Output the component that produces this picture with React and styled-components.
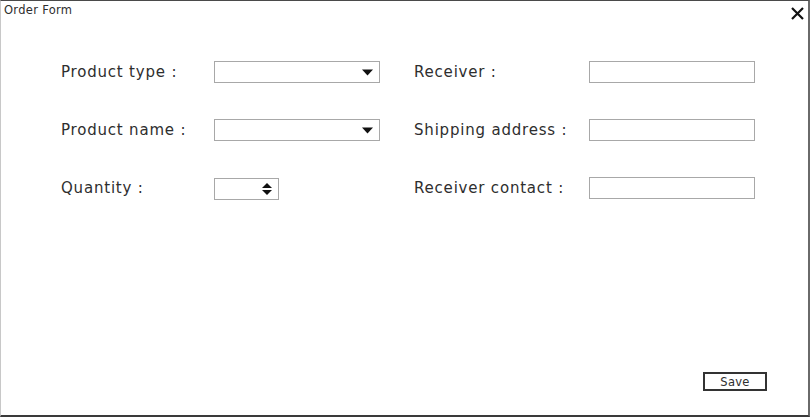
import React from "react";
import styled, { createGlobalStyle } from "styled-components";

const Global = createGlobalStyle`
  html, body { margin: 0; padding: 0; background: #fff; }
  body { font-family: "DejaVu Sans", "Noto Sans", sans-serif; color: #2e2e2e; }
  * { box-sizing: border-box; }
`;

const Window = styled.div`
  width: 810px;
  height: 417px;
  border-top: 1px solid #4a4a4a;
  border-left: 1px solid #c8c8c8;
  border-right: 2px solid #6a6a6a;
  border-bottom: 2px solid #3a3a3a;
  display: flex;
  flex-direction: column;
  background: #fff;
`;

const TitleBar = styled.div`
  display: flex;
  align-items: flex-start;
  justify-content: space-between;
  height: 60px;
  padding: 3px 2px 0 3px;
`;

const Title = styled.div`
  font-size: 11.5px;
  letter-spacing: 0.3px;
  line-height: 13px;
`;

const Close = styled.svg`
  margin-top: 3px;
  margin-right: 2px;
`;

const Body = styled.div`
  flex: 1;
  display: grid;
  grid-template-columns: 153px 166px 209px 166px;
  grid-auto-rows: 22px;
  row-gap: 36px;
  padding-left: 60px;
  align-content: start;
`;

const Label = styled.div`
  display: flex;
  align-items: center;
  font-size: 15px;
  letter-spacing: 0.8px;
  white-space: nowrap;
  padding-left: ${(p) => (p.$right ? "34px" : "0")};
`;

const Box = styled.div`
  height: 22px;
  width: ${(p) => p.$w || 166}px;
  margin-top: ${(p) => p.$dy || 0}px;
  border: 1px solid #a8a8a8;
  background: #fff;
  display: flex;
  align-items: center;
  justify-content: flex-end;
  padding-right: 6px;
`;

const Footer = styled.div`
  display: flex;
  justify-content: flex-end;
  padding: 0 41px 24px 0;
`;

const SaveButton = styled.button`
  width: 64px;
  height: 19px;
  border: 2px solid #333;
  background: #fff;
  font-family: "DejaVu Sans", "Noto Sans", sans-serif;
  font-size: 11.5px;
  letter-spacing: 0.3px;
  color: #2e2e2e;
  padding: 0;
  line-height: 14px;
`;

const Caret = () => (
  <svg width="11" height="7" viewBox="0 0 11 7">
    <path d="M0 0.5 H11 L5.5 6.5 Z" fill="#111" />
  </svg>
);

const Spin = () => (
  <svg width="10" height="14" viewBox="0 0 10 14">
    <path d="M0 6 H10 L5 1 Z" fill="#111" />
    <path d="M0 8 H10 L5 13 Z" fill="#111" />
  </svg>
);

export default function App() {
  return (
    <>
      <Global />
      <Window>
        <TitleBar>
          <Title>Order Form</Title>
          <Close width="13" height="13" viewBox="0 0 13 13">
            <path d="M1 1 L12 12 M12 1 L1 12" stroke="#111" strokeWidth="2.2" />
          </Close>
        </TitleBar>
        <Body>
          <Label>Product type :</Label>
          <Box><Caret /></Box>
          <Label $right>Receiver :</Label>
          <Box />

          <Label>Product name :</Label>
          <Box><Caret /></Box>
          <Label $right>Shipping address :</Label>
          <Box />

          <Label>Quantity :</Label>
          <Box $w={65} $dy={1}><Spin /></Box>
          <Label $right>Receiver contact :</Label>
          <Box />
        </Body>
        <Footer>
          <SaveButton>Save</SaveButton>
        </Footer>
      </Window>
    </>
  );
}
